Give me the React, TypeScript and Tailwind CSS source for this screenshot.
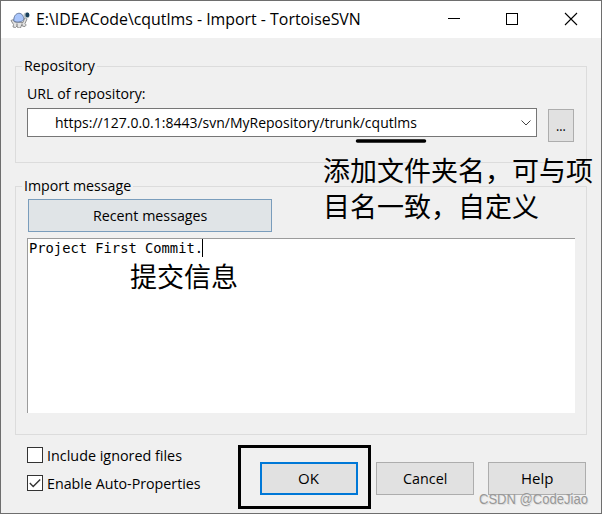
import { useLayoutEffect, useRef, useState, type ReactNode } from "react";

/** Single-line UI text condensed to a given advance width. */
function Label({ width, className = "", children }: { width: number; className?: string; children: ReactNode }) {
  const ref = useRef<HTMLSpanElement>(null);
  const [scale, setScale] = useState(1);
  useLayoutEffect(() => {
    const measure = () => {
      if (ref.current) setScale(width / ref.current.offsetWidth);
    };
    measure();
    document.fonts.ready.then(measure);
  }, [width]);
  return (
    <span className={`block shrink-0 whitespace-pre ${className}`} style={{ width }}>
      <span ref={ref} className="inline-block origin-left" style={{ transform: `scaleX(${scale})` }}>
        {children}
      </span>
    </span>
  );
}

function Turtle() {
  return (
    <svg width="20" height="16" viewBox="0 0 20 16" className="shrink-0">
      <path d="M1 8.500 3.500 7.500l1 2.500 8.500.5 1.800-5 2.200 1.500-2 4.500 1.200 1.500-1.200 1.500-2.500-.3-1-1-1 2.800H8l-1-2-1.500 1.500-2.500-.5.5-2.500Z" fill="#e4e4e4" stroke="#858585" strokeWidth=".9" />
      <path d="M3.800 9C3.600 4.500 5.500 1.700 8.700 1.300c3.200-.3 5.300 3 5 6.600-2.600 2.500-7.200 2.800-9.900 1.100Z" fill="#a9c5fb" stroke="#65799f" strokeWidth="1" />
      <circle cx="16.500" cy="3.500" r="3" fill="#b9c4c8" />
      <ellipse cx="17.400" cy="2.900" rx="2" ry="2.300" fill="#183f5b" />
      <path d="M7 11.500v2.500M12 11.500v2.500" stroke="#777" />
    </svg>
  );
}

function Group({ title, titleWidth, className, children }: { title: string; titleWidth: number; className: string; children: ReactNode }) {
  return (
    <section className={`flex flex-col border border-[#dcdcdc] ${className}`}>
      <div className="-mt-[11px] ml-[6px] flex h-[21px] shrink-0 items-center self-start bg-[#f0f0f0] px-[2px] pb-[3px]">
        <Label width={titleWidth}>{title}</Label>
      </div>
      {children}
    </section>
  );
}

function Check({ label, width, checked }: { label: string; width: number; checked?: boolean }) {
  return (
    <div className="flex h-4 items-center gap-1">
      <span className="flex size-4 shrink-0 items-center justify-center border border-[#333] bg-white">
        {checked && (
          <svg width="14" height="14" viewBox="0 0 14 14">
            <path d="M1.8 7 5.2 10.4 12.2 3.4" fill="none" stroke="#333" strokeWidth="1.4" />
          </svg>
        )}
      </span>
      <Label width={width}>{label}</Label>
    </div>
  );
}

const button = "flex h-[33px] w-[98px] items-center justify-center bg-[#e1e1e1] pb-[2px]";

export default function App() {
  return (
    <main className="relative flex h-[514px] w-[602px] flex-col overflow-hidden border border-[#6e6e6e] bg-[#f0f0f0] font-['Open_Sans','Noto_Sans_CJK_SC',sans-serif] text-[15px] leading-[20px] text-black">
      <header className="flex h-[37px] shrink-0 items-center bg-white pl-[9px]">
        <Turtle />
        <Label width={325} className="mb-[2px] ml-[6px] text-[15.5px]">E:\IDEACode\cqutlms - Import - TortoiseSVN</Label>
        <svg width="131" height="14" viewBox="0 0 131 14" className="mb-px ml-[86px]" fill="none" stroke="#000">
          <path d="M1 6.5h12M59.500 1.500h11v11h-11Z" shapeRendering="crispEdges" />
          <path d="m118 1 12 12m0-12-12 12" strokeWidth="1.100" />
        </svg>
      </header>

      <Group title="Repository" titleWidth={71} className="ml-[14px] mt-[28px] h-[97px] w-[572px] shrink-0">
        <div className="ml-[11px] mt-[6px] flex h-[20px] items-center">
          <Label width={119}>URL of repository:</Label>
        </div>
        <div className="ml-[11px] mt-[5px] flex gap-[11px]">
          <div className="flex h-[29px] w-[510px] items-center justify-between border border-[#767676] bg-white pl-[27px] pr-[5px]">
            <Label width={362} className="pb-px">https://127.0.0.1:8443/svn/MyRepository/trunk/cqutlms</Label>
            <svg width="10" height="6" viewBox="0 0 10 6" fill="none" stroke="#444">
              <path d="m.5.5 4.5 4.5L9.500.5" />
            </svg>
          </div>
          <div className="mt-px flex h-[33px] w-[26px] items-center justify-center border border-[#adadad] bg-[#e1e1e1] pb-[2px]">
            <Label width={10}>...</Label>
          </div>
        </div>
      </Group>

      <Group title="Import message" titleWidth={107} className="ml-[14px] mt-[23px] h-[249px] w-[572px] shrink-0">
        <div className="ml-[12px] mt-[2px] flex h-[33px] w-[244px] shrink-0 items-center justify-center border border-[#7a9dbc] bg-[#e0e4e7] pb-[2px]">
          <Label width={114}>Recent messages</Label>
        </div>
        <div className="ml-[11px] mt-[6px] flex h-[175px] w-[548px] shrink-0 items-start border-l border-t border-[#9b9b9b] bg-white pl-px font-['DejaVu_Sans_Mono',monospace] text-[14px]">
          <Label width={174} className="-mt-px">Project First Commit.</Label>
          <span className="-ml-px h-[18px] w-px bg-black" />
        </div>
      </Group>

      <footer className="flex pl-[26px] pt-[12px]">
        <div className="flex w-[211px] flex-col gap-[12px]">
          <Check label="Include ignored files" width={135} />
          <Check label="Enable Auto-Properties" width={154} checked />
        </div>
        <div className="-mt-[2px] flex h-[64px] w-[133px] items-center justify-center border-[3px] border-black pl-[10px] pt-[3px]">
          <div className={`${button} mr-[2px] border-2 border-[#0078d7]`}>
            <Label width={21}>OK</Label>
          </div>
        </div>
        <div className="ml-[5px] mt-[15px] flex gap-[14px]">
          <div className={`${button} border border-[#adadad]`}>
            <Label width={44}>Cancel</Label>
          </div>
          <div className={`${button} border border-[#adadad]`}>
            <Label width={32}>Help</Label>
          </div>
        </div>
      </footer>

      <svg className="absolute left-[354px] top-[137px]" width="74" height="6" viewBox="0 0 74 6">
        <path d="M2.500 3H69.500" stroke="#000" strokeWidth="3.500" strokeLinecap="round" />
      </svg>
      <p className="absolute left-[322px] top-[151px] whitespace-pre font-['Noto_Sans_CJK_SC',sans-serif] text-[27px] leading-[36px]">{"添加文件夹名，可与项\n目名一致，自定义"}</p>
      <p className="absolute left-[129px] top-[257px] whitespace-pre font-['Noto_Sans_CJK_SC',sans-serif] text-[27px] leading-[36px]">提交信息</p>
      <div className="absolute left-[478px] top-[488px] font-['Liberation_Sans',sans-serif] text-[14px] text-[#989898] [text-shadow:1px_1px_0_#ddd]">
        <Label width={109}>CSDN @CodeJiao</Label>
      </div>
    </main>
  );
}
